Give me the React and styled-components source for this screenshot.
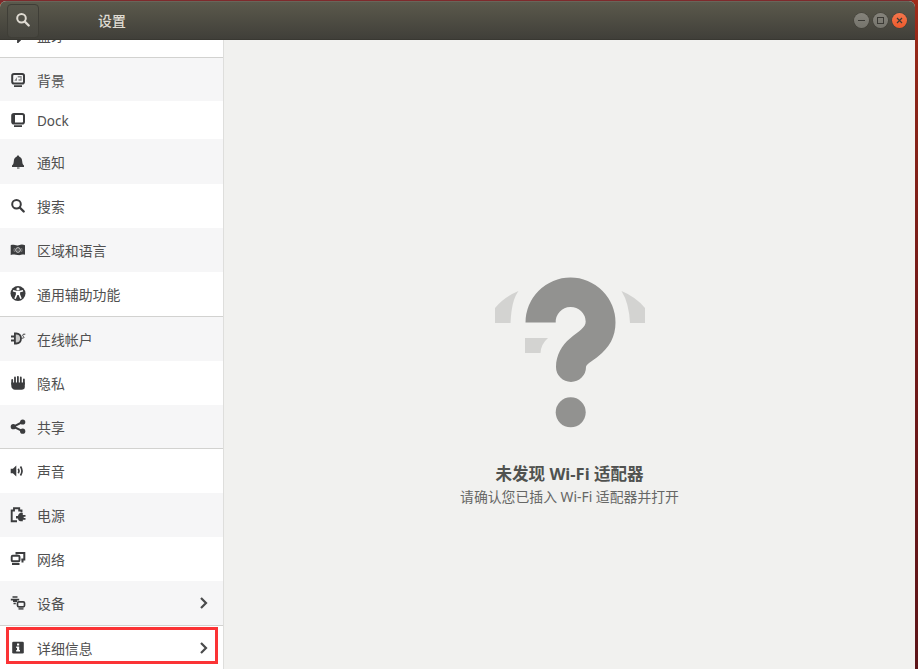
import React from 'react';
import styled, { createGlobalStyle } from 'styled-components';

const GlobalStyle = createGlobalStyle`
  * { box-sizing: border-box; }
  body {
    margin: 0;
    overflow: hidden;
    font-family: "Noto Sans", "Noto Sans CJK SC", sans-serif;
    font-size: 13.9px;
    color: #505050;
  }
`;

const Desktop = styled.div`
  width: 918px;
  height: 669px;
  padding: 1px 3px 0 0;
  overflow: hidden;
  background: linear-gradient(90deg, #7e2a2c 0 912px, transparent 912px),
    linear-gradient(180deg, #a02c1a 0, #8a2418 100px, #741a18 300px, #5c1418 669px);
  background-size: 100% 3px, 100% 100%;
  background-repeat: no-repeat;
`;

const Window = styled.main`
  display: flex;
  flex-direction: column;
  height: 668px;
  overflow: hidden;
  border-radius: 6px 6px 0 0;
  background: #f1f1ef;
`;

const TitleBar = styled.header`
  flex: none;
  display: flex;
  align-items: center;
  height: 39px;
  padding: 0 8px 0 7px;
  background: linear-gradient(#5b594c, #403f39);
  border-top: 1px solid #69655a;
  border-bottom: 1px solid #393832;
`;

const SearchButton = styled.button`
  display: grid;
  place-items: center;
  width: 32px;
  height: 34px;
  padding: 0 1px 1px 0;
  color: #dfdbd2;
  background: linear-gradient(#57564b, #474640);
  border: 1px solid #3f3e37;
  border-radius: 4px;
`;

const Title = styled.h1`
  margin: 0 0 0 59px;
  font-size: 13.9px;
  font-weight: 500;
  line-height: 20px;
  color: #dfdbd2;
`;

const Controls = styled.div`
  display: flex;
  gap: 4px;
  margin-left: auto;
`;

const ControlButton = styled.button`
  display: grid;
  place-items: center;
  width: 15px;
  height: 15px;
  padding: 0;
  border: 0;
  border-radius: 50%;
  color: #3b3a35;
  background: ${(p) => (p.$close ? 'linear-gradient(#f4764c, #ec5a2c)' : 'linear-gradient(#85837b, #75746c)')};
  box-shadow: 0 0 0 0.5px #403f38;
`;

const Body = styled.div`
  flex: 1;
  min-height: 0;
  display: flex;
`;

const Sidebar = styled.nav`
  flex: none;
  display: flex;
  flex-direction: column;
  justify-content: flex-end;
  width: 224px;
  height: 630px;
  overflow: hidden;
  background: #fff;
  border-right: 1px solid #dededc;
`;

const Row = styled.a`
  flex: none;
  display: flex;
  align-items: center;
  height: ${(p) => p.$height || 44}px;
  padding: 0 13px 0 10px;
  background: ${(p) => (p.$shaded ? '#f6f6f7' : '#fff')};
  border-bottom: ${(p) => (p.$divided ? '1px solid #d2d2d0' : '0')};
`;

const IconSlot = styled.span`
  display: flex;
  width: 27px;
  color: #3b3c3e;
`;

const Label = styled.span`
  flex: 1;
  padding-top: 2px;
  font-size: ${(p) => (p.$latin ? 13.5 : 13.9)}px;
  line-height: 20px;
  white-space: nowrap;
`;

const Highlight = styled.div`
  position: absolute;
  left: 6px;
  top: 627px;
  width: 212px;
  height: 37px;
  border: 3px solid #fb3335;
  pointer-events: none;
`;

const Content = styled.section`
  flex: 1;
  display: flex;
  flex-direction: column;
  align-items: center;
  padding: 237px 0 0;
`;

const Heading = styled.h2`
  margin: 34px 0 0;
  font-size: 16.55px;
  line-height: 24px;
  font-weight: 700;
  color: #50524f;
`;

const Hint = styled.p`
  margin: 0;
  font-size: 13.85px;
  line-height: 22px;
  color: #666765;
`;

const line = { fill: 'none', stroke: 'currentColor' };

const icons = {
  bluetooth: <path d="M8 1v14l4-4-8-6m0 6 8-6-4-4" {...line} strokeWidth="1.8" />,
  background: (
    <>
      <rect x="2.2" y="2" width="11.800" height="9.500" rx="1.800" {...line} strokeWidth="2" />
      <path d="M4 13.300h8V15H4z" />
      <path d="M4.300 8.800 7 5.300v3.500zM7.700 4h4v4.800H8.500V7.300h1.900V5.400H7.700z" opacity=".6" />
    </>
  ),
  dock: (
    <>
      <rect x="2.200" y="2" width="11.800" height="9.500" rx="1.800" {...line} strokeWidth="2" />
      <path d="M4 13.300h8V15H4zM3 3h2v8H3z" />
    </>
  ),
  bell: <path d="M8 1.500c1 0 1.200.7 1.300 1.200C11.500 3.300 12 5 12.200 7.200c.2 2.500.6 3.400 1.800 4.300V13H2v-1.500c1.200-.9 1.600-1.800 1.800-4.300C4 5 4.500 3.300 6.700 2.700 6.800 2.200 7 1.500 8 1.500zM7 13.400h2.500v1.100H7z" />,
  search: (
    <>
      <circle cx="6.500" cy="6.300" r="4.300" {...line} strokeWidth="2" />
      <path d="m9.700 9.500 4 4" {...line} strokeWidth="2.400" strokeLinecap="round" />
    </>
  ),
  region: (
    <>
      <path d="M.7 3.200c3-1.500 5 1 8 0 2.500-.8 4-.8 6.300 0v9.600c-3-.9-4.500.8-7.300.2-2.500-.6-4-.7-7 0z" />
      <circle cx="8" cy="8" r="2.300" fill="none" stroke="#d5d5d5" strokeWidth="1" />
      <circle cx="8" cy="8" r=".6" fill="#d5d5d5" />
      <path d="M4.500 6q-1.200 2 0 4M11.500 6q1.200 2 0 4" fill="none" stroke="#999" strokeWidth=".7" />
    </>
  ),
  access: (
    <>
      <circle cx="8" cy="7.500" r="7.500" />
      <circle cx="8" cy="3" r="1.600" fill="#fff" />
      <path d="M3 4.700 6.700 5.600v3L5 12.700M13 4.700 9.300 5.600v3l1.700 4.100M8 5v4" fill="none" stroke="#fff" strokeWidth="1.600" />
    </>
  ),
  accounts: (
    <>
      <path d="M4.900 2.500h1.300c3 0 4.800 2.200 4.800 5s-1.800 5-4.800 5H4.900z" fill="#c9c9c9" stroke="currentColor" strokeWidth="1.800" />
      <path d="M1 5.500H5M1 9.500H5" {...line} strokeWidth="2" />
      <path d="M11.500 7.200h1.200c1.500 0 1.500-1.200.7-1.700-1-.7-1-2.300.4-2.300h1.500" {...line} strokeWidth="1" />
    </>
  ),
  hand: (
    <>
      <path d="M2.200 9V5M5 8V2.500M7.900 8V1.800M10.800 8V2.500M13.900 9V4.500" {...line} strokeWidth="1.800" strokeLinecap="round" />
      <path d="M1.300 7.500h13.500v4.500c0 1.700-1.300 2.700-3.200 2.700H5C3 14.700 1.300 13 1.300 11z" />
    </>
  ),
  share: (
    <>
      <path d="M12.500 3 3.500 7.700l9 4.500" {...line} strokeWidth="2" />
      <circle cx="12.700" cy="3" r="2.600" />
      <circle cx="3.300" cy="7.700" r="2.600" />
      <circle cx="12.700" cy="12.200" r="2.600" />
    </>
  ),
  sound: (
    <>
      <path d="M.7 5.700h2.200L6.300 2.500v11L2.900 10.300H.7z" />
      <path d="M8.300 5.700q1.500 2.300 0 4.600M10.500 3.500q3 4.500 0 9" {...line} strokeWidth="1.700" />
    </>
  ),
  power: (
    <>
      <path d="M7 14.300H1.700V3.500H4V1.300h5.200v2.200h2.300v2" {...line} strokeWidth="1.900" />
      <path d="M10 6h2.800v2h2.700v1.700h-1.800v1.400h1.800v1.700h-2.700v1.500H10.600c-1.500 0-2.300-1-2.600-2.800H6V9h2C8.200 7.500 9 6.500 10 6z" />
    </>
  ),
  network: (
    <>
      <path d="M6.500 3.500V2h7.800v6.500h-3M12.500 9v2.500" {...line} strokeWidth="2" />
      <rect x="1.700" y="4.800" width="7.800" height="5.500" rx="1" {...line} strokeWidth="1.900" />
      <path d="M2 12h7.500v2H2z" />
    </>
  ),
  devices: (
    <>
      <path d="M2.500 1.300h5v1.500h-5zM.8 3.700h8.400v1.900H7V7H3V5.600H.8zM3.500 7.700h2.300v1.600H3.500z" />
      <rect x="7.500" y="6.800" width="7" height="5" rx="1.300" {...line} strokeWidth="1.700" />
      <path d="M8.500 13.200h5v1.400h-5z" />
    </>
  ),
  info: (
    <>
      <rect x="2.200" y="1.800" width="11.600" height="11.700" rx="1.300" />
      <path d="M7 3.500h2.200v2H7zM6.200 6.500h3V10h.8v1.500H6.200V10H7V8h-.8z" fill="#fff" />
    </>
  ),
};

function Icon({ name, size = 16 }) {
  return (
    <svg width={size} height={size} viewBox="0 0 16 16" fill="currentColor" aria-hidden="true">
      {icons[name]}
    </svg>
  );
}

function Chevron() {
  return (
    <svg width="12" height="14" viewBox="0 0 12 14" aria-hidden="true">
      <path d="m3 2 5 5-5 5" fill="none" stroke="#4a4b4c" strokeWidth="2.200" />
    </svg>
  );
}

function MissingAdapter() {
  return (
    <svg width="150" height="151" viewBox="495 277 150 151" aria-hidden="true">
      <g fill="#d3d3d1">
        <path d="M495 323v-15q9-11 23.500-17-7 9-8 32z" />
        <path d="M645 323v-15q-9-11-23.500-17 7.500 12 8.500 32z" />
        <path d="M525 338H548q-7 6-7.500 15h-15.500z" />
      </g>
      <g fill="#929290">
        <path d="M525.500 322.500A45 45 0 0 1 570.500 277.500A45 45 0 0 1 615.500 322.500c0 14-6 25-17.500 34-6 4.500-12 8-12 10.500a15 15 0 0 1-30 0c0-12 6-22 14-28.500 9-7.500 15.700-11 15.700-17a15 15 0 0 0-30 1z" />
        <circle cx="570.700" cy="412.300" r="15" />
      </g>
    </svg>
  );
}

const items = [
  { icon: 'bluetooth', label: '蓝牙', height: 45, divided: true },
  { icon: 'background', label: '背景', shaded: true, height: 43 },
  { icon: 'dock', label: 'Dock', height: 38, latin: true },
  { icon: 'bell', label: '通知', shaded: true, height: 45 },
  { icon: 'search', label: '搜索' },
  { icon: 'region', label: '区域和语言', shaded: true },
  { icon: 'access', label: '通用辅助功能', height: 45, divided: true },
  { icon: 'accounts', label: '在线帐户', shaded: true },
  { icon: 'hand', label: '隐私' },
  { icon: 'share', label: '共享', shaded: true, divided: true, height: 44 },
  { icon: 'sound', label: '声音' },
  { icon: 'power', label: '电源', shaded: true },
  { icon: 'network', label: '网络' },
  { icon: 'devices', label: '设备', shaded: true, divided: true, more: true, height: 45 },
  { icon: 'info', label: '详细信息', more: true },
];

export default function App() {
  return (
    <Desktop>
      <GlobalStyle />
      <Window>
        <TitleBar>
          <SearchButton aria-label="搜索"><Icon name="search" /></SearchButton>
          <Title>设置</Title>
          <Controls>
            <ControlButton>
              <svg width="9" height="9"><path d="M1 4.500h7" {...line} /></svg>
            </ControlButton>
            <ControlButton>
              <svg width="9" height="9"><rect x="1.500" y="1.500" width="6" height="6" {...line} /></svg>
            </ControlButton>
            <ControlButton $close>
              <svg width="9" height="9"><path d="m2 2 5 5m0-5-5 5" {...line} strokeWidth="1.200" /></svg>
            </ControlButton>
          </Controls>
        </TitleBar>
        <Body>
          <Sidebar>
            {items.map((item) => (
              <Row key={item.icon} $height={item.height} $shaded={item.shaded} $divided={item.divided}>
                <IconSlot><Icon name={item.icon} /></IconSlot>
                <Label $latin={item.latin}>{item.label}</Label>
                {item.more && <Chevron />}
              </Row>
            ))}
          </Sidebar>
          <Content>
            <MissingAdapter />
            <Heading>未发现 Wi-Fi 适配器</Heading>
            <Hint>请确认您已插入 Wi-Fi 适配器并打开</Hint>
          </Content>
        </Body>
      </Window>
      <Highlight />
    </Desktop>
  );
}
